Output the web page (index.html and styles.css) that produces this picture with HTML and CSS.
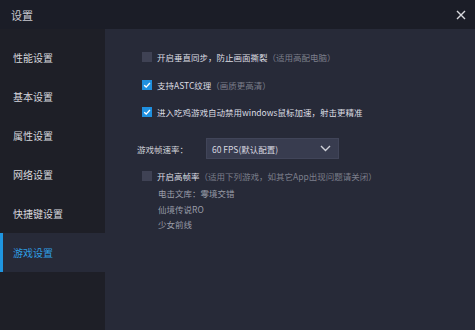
FILE: index.html
```html
<!DOCTYPE html>
<html>
<head>
<meta charset="utf-8">
<link rel="stylesheet" href="styles.css">
</head>
<body>
<div class="win">
  <div class="titlebar">
    <span class="title">设置</span>
    <svg class="close" width="10" height="10" viewBox="0 0 10 10"><path d="M1 1L9 9M9 1L1 9" stroke="#d8d9de" stroke-width="1.4"/></svg>
  </div>
  <div class="body">
    <nav class="side">
      <div class="item">性能设置</div>
      <div class="item">基本设置</div>
      <div class="item">属性设置</div>
      <div class="item">网络设置</div>
      <div class="item">快捷键设置</div>
      <div class="item active">游戏设置</div>
    </nav>
    <main class="content">
      <div class="row r1"><span class="cb"></span><span class="txt">开启垂直同步，防止画面撕裂</span><span class="hint">（适用高配电脑）</span></div>
      <div class="row r2"><span class="cb on"><svg width="10" height="10" viewBox="0 0 10 10"><path d="M2.2 5.2L4.2 7.1L7.9 3" fill="none" stroke="#fff" stroke-width="1.4"/></svg></span><span class="txt">支持ASTC纹理</span><span class="hint">（画质更高清）</span></div>
      <div class="row r3"><span class="cb on"><svg width="10" height="10" viewBox="0 0 10 10"><path d="M2.2 5.2L4.2 7.1L7.9 3" fill="none" stroke="#fff" stroke-width="1.4"/></svg></span><span class="txt">进入吃鸡游戏自动禁用windows鼠标加速，射击更精准</span></div>
      <div class="fps">
        <span class="label">游戏帧速率：</span>
        <div class="select"><span>60 FPS(默认配置)</span><svg width="11" height="7" viewBox="0 0 11 7"><path d="M1 1L5.5 5.5L10 1" fill="none" stroke="#cfd1d8" stroke-width="1.4"/></svg></div>
      </div>
      <div class="row r4"><span class="cb"></span><span class="txt">开启高帧率</span><span class="hint">（适用下列游戏，如其它App出现问题请关闭）</span></div>
      <ul class="games">
        <li>电击文库：零境交错</li>
        <li>仙境传说RO</li>
        <li>少女前线</li>
      </ul>
    </main>
  </div>
</div>
</body>
</html>
```
FILE: styles.css
```css
html, body {
  margin: 0;
  padding: 0;
  background: #272a38;
}
.win {
  width: 475px;
  height: 330px;
  display: flex;
  flex-direction: column;
  font-family: "Noto Sans CJK SC", "Noto Sans", sans-serif;
  color: #d9dae0;
}
.titlebar {
  height: 29px;
  flex: none;
  background: #1b1d27;
  display: flex;
  align-items: center;
  justify-content: space-between;
  padding: 0 9px 0 11px;
}
.title {
  font-size: 11px;
  color: #c9cad1;
}
.close {
  display: block;
}
.body {
  flex: 1;
  display: flex;
}
.side {
  width: 105px;
  flex: none;
  background: #1e1f27;
  padding-top: 9px;
}
.item {
  height: 39px;
  line-height: 39px;
  padding-left: 13px;
  font-size: 10px;
  color: #d6d7dd;
}
.item.active {
  background: #272a38;
  color: #2f9fe3;
  border-left: 3px solid #1f95e0;
  padding-left: 10px;
}
.content {
  flex: 1;
  padding: 19px 0 0 37px;
  font-size: 8.5px;
}
.row {
  display: flex;
  align-items: center;
  height: 18px;
}
.r2 { margin-top: 10px; }
.r3 { margin-top: 9px; }
.r4 { margin-top: 8px; }
.cb {
  width: 10px;
  height: 10px;
  background: #3f4254;
  margin-right: 5px;
  flex: none;
  display: flex;
}
.cb.on {
  background: #1f90e0;
}
.txt {
  color: #dcdde3;
}
.hint {
  color: #7c7f8b;
}
.fps {
  display: flex;
  align-items: center;
  margin: 17px 0 0 -5px;
}
.label {
  width: 69px;
  color: #d2d3d9;
}
.select {
  width: 119px;
  height: 19px;
  background: #383c4f;
  border: 1px solid #414559;
  display: flex;
  align-items: center;
  justify-content: space-between;
  padding: 0 7px 0 5px;
  color: #d9dae0;
}
.games {
  list-style: none;
  margin: 1px 0 0 16px;
  padding: 0;
  color: #9a9da8;
}
.games li {
  height: 15.5px;
  line-height: 15.5px;
}
```
